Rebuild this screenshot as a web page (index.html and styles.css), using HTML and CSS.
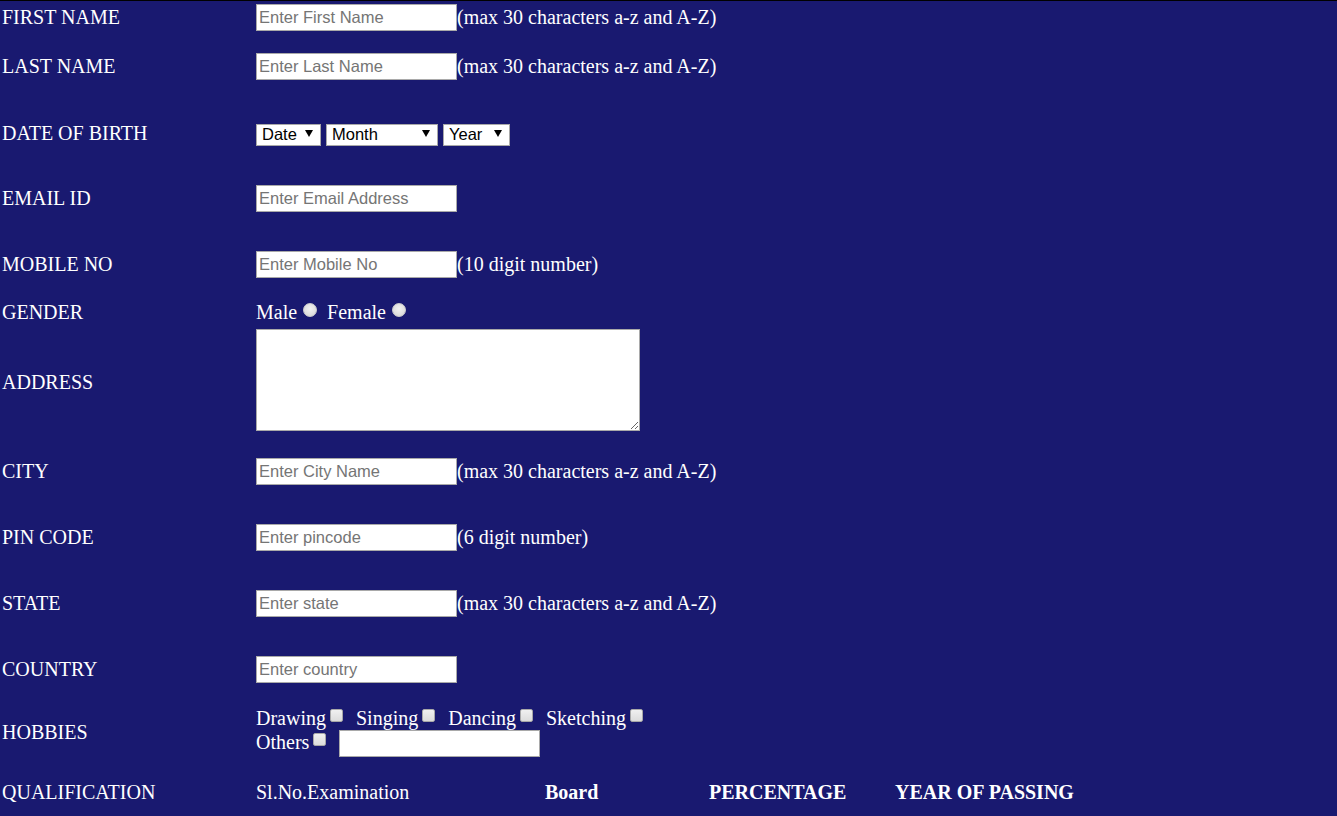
FILE: index.html
```html
<!DOCTYPE html>
<html lang="en">
<head>
<meta charset="utf-8">
<title>Student Registration Form</title>
<link rel="stylesheet" href="styles.css">
</head>
<body>
<form class="form">
  <div class="label">FIRST NAME</div>
  <div class="value"><input class="text" type="text" placeholder="Enter First Name"><span class="hint">(max 30 characters a-z and A-Z)</span></div>

  <div class="label">LAST NAME</div>
  <div class="value"><input class="text" type="text" placeholder="Enter Last Name"><span class="hint">(max 30 characters a-z and A-Z)</span></div>

  <div class="label">DATE OF BIRTH</div>
  <div class="value selects">
    <span class="select-wrap"><select class="select select--date"><option>Date</option></select></span>
    <span class="select-wrap"><select class="select select--month"><option>Month</option></select></span>
    <span class="select-wrap"><select class="select select--year"><option>Year</option></select></span>
  </div>

  <div class="label">EMAIL ID</div>
  <div class="value"><input class="text" type="text" placeholder="Enter Email Address"></div>

  <div class="label">MOBILE NO</div>
  <div class="value"><input class="text" type="text" placeholder="Enter Mobile No"><span class="hint">(10 digit number)</span></div>

  <div class="label">GENDER</div>
  <div class="value block">Male<input class="radio" type="radio" name="gender"> Female<input class="radio" type="radio" name="gender"></div>

  <div class="label">ADDRESS</div>
  <div class="value block"><textarea class="area"></textarea></div>

  <div class="label">CITY</div>
  <div class="value"><input class="text" type="text" placeholder="Enter City Name"><span class="hint">(max 30 characters a-z and A-Z)</span></div>

  <div class="label">PIN CODE</div>
  <div class="value"><input class="text" type="text" placeholder="Enter pincode"><span class="hint">(6 digit number)</span></div>

  <div class="label">STATE</div>
  <div class="value"><input class="text" type="text" placeholder="Enter state"><span class="hint">(max 30 characters a-z and A-Z)</span></div>

  <div class="label">COUNTRY</div>
  <div class="value"><input class="text" type="text" placeholder="Enter country"></div>

  <div class="label">HOBBIES</div>
  <div class="value block">
    <div class="line">Drawing<input class="check" type="checkbox"> Singing<input class="check" type="checkbox"> Dancing<input class="check" type="checkbox"> Sketching<input class="check" type="checkbox"></div>
    <div class="line">Others<input class="check" type="checkbox"> <input class="text" type="text"></div>
  </div>

  <div class="label label--low">QUALIFICATION</div>
  <div class="value value--low quals">
    <span>Sl.No.Examination</span>
    <span class="th">Board</span>
    <span class="th">PERCENTAGE</span>
    <span class="th">YEAR OF PASSING</span>
  </div>
</form>
</body>
</html>
```

FILE: styles.css
```css
html, body {
  margin: 0;
  padding: 0;
}

body {
  background: #191970;
  border-top: 1px solid #000;
  color: #fff;
  font-family: "Liberation Serif", "Times New Roman", serif;
  font-size: 20px;
}

.form {
  display: grid;
  grid-template-columns: 254px 1fr;
  grid-template-rows: 33px 65px 68px 62px 70px 26px 114px 64px 68px 64px 68px 58px 54px;
  align-items: center;
  padding-left: 2px;
}

.label {
  white-space: nowrap;
}

.value {
  display: flex;
  align-items: center;
}

.value.block {
  display: block;
}

.label--low,
.value--low {
  align-self: stretch;
  padding-top: 8px;
  display: flex;
  align-items: center;
}

.text {
  box-sizing: border-box;
  width: 201px;
  height: 27px;
  margin: 0;
  padding: 0 2px;
  border: 1px solid #a9a9a9;
  background: #fff;
  font-family: "Liberation Sans", Arial, sans-serif;
  font-size: 16.5px;
  color: #000;
  outline: none;
}

.text::placeholder {
  color: #757575;
}

.hint {
  white-space: nowrap;
}

.selects {
  gap: 5px;
}

.select-wrap {
  position: relative;
  display: inline-block;
  height: 22px;
}

.select-wrap::after {
  content: "";
  position: absolute;
  right: 8px;
  top: 8px;
  border-left: 4px solid transparent;
  border-right: 4px solid transparent;
  border-top: 7px solid #000;
  pointer-events: none;
}

.select {
  -webkit-appearance: none;
  appearance: none;
  box-sizing: border-box;
  height: 22px;
  margin: 0;
  padding: 0 0 2px 5px;
  border: 1px solid #a9a9a9;
  border-radius: 0;
  background: #fff;
  color: #000;
  font-family: "Liberation Sans", Arial, sans-serif;
  font-size: 16.5px;
  line-height: 18px;
}

.select--date { width: 65px; }
.select--month { width: 112px; }
.select--year { width: 67px; }

.radio {
  -webkit-appearance: none;
  appearance: none;
  box-sizing: border-box;
  width: 14px;
  height: 14px;
  margin: 0 5px 2px 6px;
  border: 1px solid #cfcfcf;
  border-radius: 50%;
  background: radial-gradient(circle at 50% 40%, #f2f2f2 0%, #e0e0e0 60%, #d2d2d2 100%);
  vertical-align: baseline;
}

.check {
  -webkit-appearance: none;
  appearance: none;
  box-sizing: border-box;
  width: 13px;
  height: 13px;
  margin: 0 8px 3px 4px;
  border: 1px solid #a8a8a8;
  border-radius: 2px;
  background: linear-gradient(#f0f0f0, #dcdcdc);
  vertical-align: baseline;
}

.line {
  white-space: nowrap;
}

.area {
  box-sizing: border-box;
  width: 384px;
  height: 102px;
  margin: 0;
  border: 1px solid #a9a9a9;
  background: #fff;
  vertical-align: baseline;
}

.quals {
  display: grid;
  grid-template-columns: 289px 164px 186px auto;
  justify-content: start;
  white-space: nowrap;
}

.th {
  font-weight: bold;
}
```
